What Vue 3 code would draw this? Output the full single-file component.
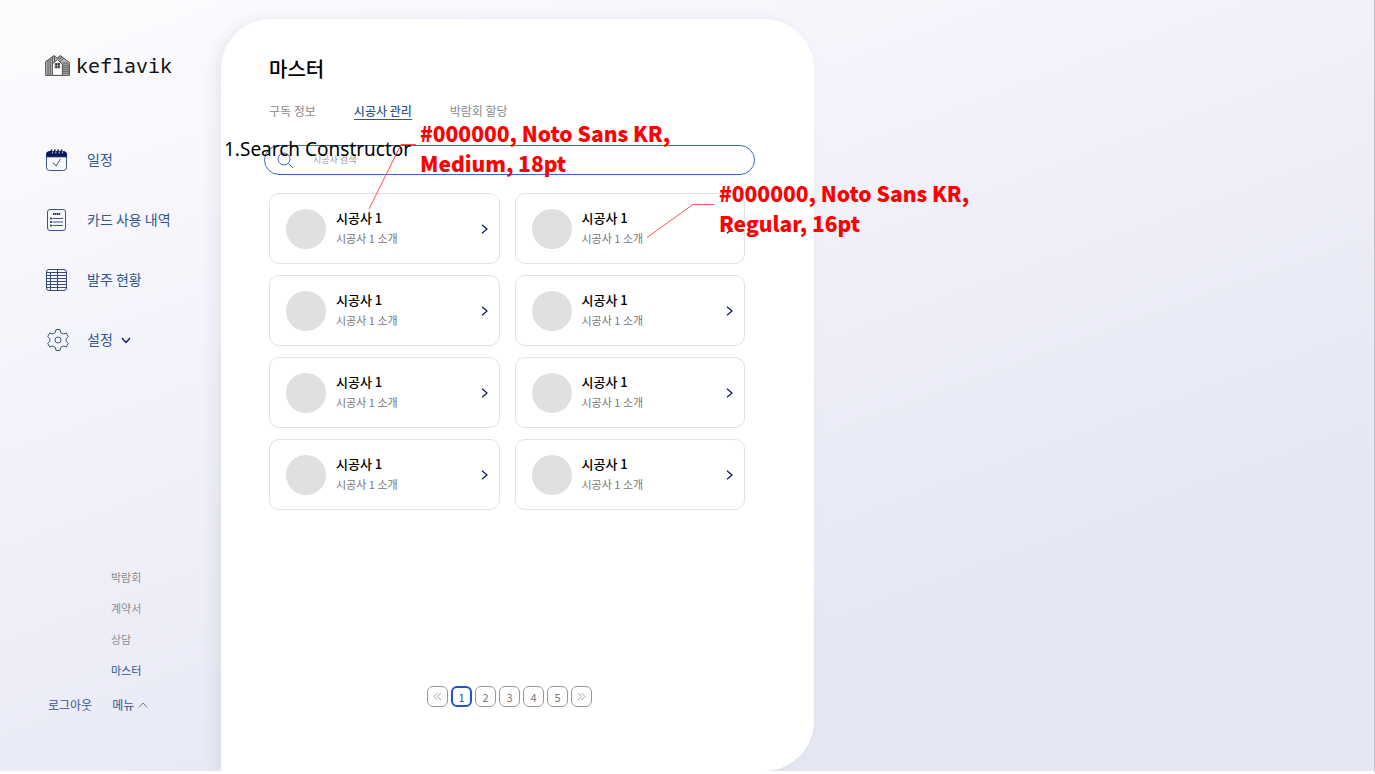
<script setup>
import { ref } from 'vue'

const search = ref('')
const current = ref(1)
const pages = [1, 2, 3, 4, 5]
const tabs = ['구독 정보', '시공사 관리', '박람회 할당']
const submenu = ['박람회', '계약서', '상담', '마스터']
const constructors = Array.from({ length: 8 }, (_, id) => ({
  id,
  name: '시공사 1',
  intro: '시공사 1 소개'
}))
const gridRows = [4, 7, 10, 13, 16, 19]
</script>

<template>
  <div class="shell">
    <aside class="sidebar">
      <a class="logo" href="#">
        <svg width="25" height="22" viewBox="0 0 25 22" fill="none" stroke="#444" stroke-width="0.9">
          <path d="M.6 20.400V6.700L9 .5l3.200 2.600L15.300.5 24.400 7.500v12.900z" fill="#bbb" />
          <path d="M7.400 20.400V9.100l5-4.600 5 4.600v11.300z" fill="#fcfcff" />
          <path d="M3 20V5.200M5.200 20V3.400M7.400 9V1.900M9.500 7V1" />
          <path d="M12.400 3.600l3-2.400M13.800 4.800l3.200-2.600M15.300 6.200l3.300-2.800M17.400 8h5.800M17.400 10.200h7M17.400 12.200h7M17.400 14.200h7M17.400 16.200h7M17.400 18.200h7" />
          <path d="M10.300 8.500h4.300v4.300h-4.300z" fill="#222" />
          <path d="M12.500 8.500v4.500M10 10.700h5" stroke="#ddd" stroke-width="0.6" />
        </svg>
        <span>keflavik</span>
      </a>

      <nav class="nav" aria-label="주 메뉴">
        <a href="#">
          <svg width="24" height="24" viewBox="0 0 24 24" fill="none" stroke="#3c5583">
            <rect x="1.500" y="4" width="20" height="18.500" rx="3" />
            <path d="M1.500 8.800V6.500a3 3 0 0 1 3-3h14a3 3 0 0 1 3 3v2.300z" fill="#06195c" stroke="#06195c" />
            <path d="M6.500 1.500v3.500M9.800 1.500v3.500M13.200 1.500v3.500M16.500 1.500v3.500" stroke="#06195c" stroke-width="1.600" />
            <path d="M7.500 3.500v2M10.800 3.500v2M14.200 3.500v2M17.500 3.500v2" stroke="#eef" stroke-width="0.800" />
            <path d="M8 14.500l3 3.500 4.500-7" />
          </svg>
          <span>일정</span>
        </a>
        <a href="#">
          <svg width="24" height="24" viewBox="0 0 24 24" fill="none" stroke="#3c5583">
            <rect x="2.500" y="1.500" width="18" height="21" rx="2.500" />
            <path d="M8 6h7.500" stroke="#233a70" stroke-width="2.200" stroke-dasharray="1.500 .4" />
            <path d="M7.500 10.500h10.500M7.500 14h10.500M7.500 17.500h10.500" />
            <path d="M5 10.500h2M5 14h2M5 17.500h2" stroke-width="2" />
          </svg>
          <span>카드 사용 내역</span>
        </a>
        <a href="#">
          <svg width="24" height="24" viewBox="0 0 24 24" fill="none" stroke="#33487c">
            <rect x="1.500" y="1.500" width="20" height="21" rx="2.500" />
            <path d="M5.500 4v18.500M12.500 1.500v21" />
            <path v-for="y in gridRows" :key="y" :d="`M1.500 ${y + 0.5}h20`" />
          </svg>
          <span>발주 현황</span>
        </a>
        <a href="#">
          <svg width="24" height="24" viewBox="0 0 24 24" fill="none" stroke="#3c5583" stroke-linejoin="round">
            <path d="M11 1.500h4l.7 3 2.600 1.500 3-.9 2 3.500-2.200 2.100v2.600l2.200 2.100-2 3.500-3-.9-2.600 1.500-.7 3h-4l-.7-3-2.600-1.500-3 .9-2-3.500 2.200-2.100v-2.600L2.700 8.600l2-3.500 3 .9 2.600-1.500z" />
            <circle cx="13" cy="12" r="3" />
          </svg>
          <span>설정</span>
          <svg class="chev" width="10" height="7" viewBox="0 0 10 7" fill="none" stroke="#06195c" stroke-width="1.300"><path d="M1 1l4 4.500L9 1" /></svg>
        </a>
      </nav>

      <div class="lower">
        <nav class="submenu" aria-label="하위 메뉴">
          <a v-for="item in submenu" :key="item" href="#" :class="{ active: item === '마스터' }">{{ item }}</a>
        </nav>
        <div class="account">
          <button type="button">로그아웃</button>
          <button type="button">
            메뉴
            <svg width="10" height="6" viewBox="0 0 10 6" fill="none" stroke="#5d7396" stroke-width="0.900"><path d="M.8 5.500L5 1l4.200 4.500" /></svg>
          </button>
        </div>
      </div>
    </aside>

    <main class="panel">
      <h1>마스터</h1>
      <nav class="tabs" aria-label="마스터 메뉴">
        <a v-for="(tab, i) in tabs" :key="tab" href="#" :class="{ active: i === 1 }">{{ tab }}</a>
      </nav>

      <label class="search">
        <svg width="17" height="17" viewBox="0 0 17 17" fill="none" stroke="#3d66d0"><circle cx="7" cy="7" r="6" /><path d="M11.300 11.300L16 16" /></svg>
        <input v-model="search" type="text" placeholder="시공사 검색" aria-label="시공사 검색" />
      </label>

      <section class="cards">
        <a v-for="c in constructors" :key="c.id" class="card" href="#">
          <span class="avatar"></span>
          <span class="info">
            <strong>{{ c.name }}</strong>
            <span>{{ c.intro }}</span>
          </span>
          <svg width="7" height="10" viewBox="0 0 7 10" fill="none" stroke="#06195c" stroke-width="1.200"><path d="M1 .8L6 5 1 9.200" /></svg>
        </a>
      </section>

      <nav class="pager" aria-label="페이지">
        <button type="button" aria-label="처음">
          <svg width="9" height="9" viewBox="0 0 9 9" fill="none" stroke="#999" stroke-width="0.900"><path d="M4.500 1L1 4.500 4.500 8M8 1L4.500 4.500 8 8" /></svg>
        </button>
        <button v-for="p in pages" :key="p" type="button" :class="{ active: p === current }" @click="current = p">{{ p }}</button>
        <button type="button" aria-label="마지막">
          <svg width="9" height="9" viewBox="0 0 9 9" fill="none" stroke="#999" stroke-width="0.900"><path d="M1 1l3.500 3.500L1 8M4.500 1L8 4.500 4.500 8" /></svg>
        </button>
      </nav>

      <div class="note step">1.Search Constructor</div>
      <svg class="note lead-a" width="50" height="68" viewBox="0 0 50 68" fill="none" stroke="#ff5050"><path d="M1 66L33 1.500h15" /></svg>
      <div class="note spec spec-a">#000000, Noto Sans KR,<br />Medium, 18pt</div>
      <svg class="note lead-b" width="70" height="36" viewBox="0 0 70 36" fill="none" stroke="#ff5050"><path d="M1 34.500L47 1.500h21" /></svg>
      <div class="note spec spec-b">#000000, Noto Sans KR,<br />Regular, 16pt</div>
    </main>
  </div>
</template>

<style>
body {
  margin: 0;
}
</style>

<style scoped>
.shell {
  box-sizing: border-box;
  display: grid;
  grid-template-columns: 221fr 593fr 560fr;
  min-height: 100vh;
  overflow: hidden;
  border-right: 1px solid #c4c4c8;
  border-bottom: 3px solid #fff;
  background: linear-gradient(160deg, #fdfdff 0%, #f3f3fb 32%, #e5e7f3 76%, #e5e7f3 100%);
  font-family: "Noto Sans CJK KR", "Noto Sans", sans-serif;
  color: #000;
}
a {
  color: inherit;
  text-decoration: none;
}
button {
  padding: 0;
  border: 0;
  background: none;
  font: inherit;
  color: inherit;
}
.sidebar {
  display: flex;
  flex-direction: column;
  padding: 54px 0 57px 45px;
}
.logo {
  display: flex;
  align-items: center;
  gap: 6px;
  height: 24px;
  font: 20px/24px "Noto Sans Mono", "DejaVu Sans Mono", monospace;
  color: #111;
}
.nav {
  display: flex;
  flex-direction: column;
  gap: 36px;
  margin-top: 70px;
}
.nav a {
  display: flex;
  align-items: center;
  height: 24px;
  font-size: 14px;
  color: #31568f;
}
.nav span {
  margin: 0 0 2px 18px;
}
.chev {
  margin-left: 8px;
}
.lower {
  margin-top: auto;
}
.submenu {
  display: flex;
  flex-direction: column;
  gap: 15px;
  margin: 0 0 18px 66px;
  font-size: 11px;
  line-height: 16px;
  color: #8c8c8c;
}
.submenu .active {
  color: #31568f;
}
.account {
  display: flex;
  gap: 20px;
  padding-left: 3px;
  font-size: 12px;
  line-height: 18px;
  color: #31568f;
}
.account button {
  display: flex;
  align-items: center;
  gap: 4px;
}
.panel {
  position: relative;
  box-sizing: border-box;
  display: flex;
  flex-direction: column;
  margin-top: 19px;
  padding: 36px 59px 64px 43px;
  border-radius: 50px 50px 50px 0;
  background: #fff;
  box-shadow: -6px 0 14px rgba(40, 50, 90, 0.08);
}
h1 {
  margin: 0 5px;
  font-size: 20px;
  line-height: 28px;
  font-weight: 500;
}
.tabs {
  display: flex;
  gap: 38px;
  margin: 19px 5px 0;
  font-size: 12px;
  line-height: 17px;
  color: #8c8c8c;
}
.tabs .active {
  border-bottom: 1px solid #31568f;
  font-weight: 500;
  color: #31568f;
}
.search {
  box-sizing: border-box;
  display: flex;
  align-items: center;
  gap: 19px;
  height: 30px;
  margin-top: 25px;
  padding: 0 12px;
  border: 1px solid #3d66d0;
  border-radius: 15px;
}
.search input {
  flex: 1;
  padding: 0;
  border: 0;
  outline: 0;
  background: none;
  font: 9px/14px "Noto Sans CJK KR", "Noto Sans", sans-serif;
}
.search input::placeholder {
  color: #9c9c9c;
}
.cards {
  display: grid;
  grid-template-columns: 1fr 1fr;
  gap: 11px 15px;
  margin: 18px 10px 0 5px;
}
.card {
  box-sizing: border-box;
  display: flex;
  align-items: center;
  min-height: 71px;
  padding: 0 11px 0 16px;
  border: 1px solid #e2e2e2;
  border-radius: 10px;
}
.avatar {
  width: 40px;
  height: 40px;
  border-radius: 50%;
  background: #e0e0e0;
}
.info {
  display: flex;
  flex: 1;
  flex-direction: column;
  margin: 0 0 2px 10px;
  font-size: 11px;
  line-height: 20px;
  color: #777;
}
.info strong {
  font-size: 13px;
  font-weight: 500;
  color: #000;
}
.pager {
  display: flex;
  justify-content: center;
  gap: 3px;
  margin-top: auto;
}
.pager button {
  box-sizing: border-box;
  display: grid;
  place-items: center;
  width: 21px;
  height: 21px;
  border: 1px solid #999;
  border-radius: 6px;
  font-size: 11px;
  line-height: 12px;
  color: #777;
}
.pager .active {
  border: 2px solid #2350cc;
  color: #2350cc;
}
.note {
  position: absolute;
  white-space: nowrap;
  pointer-events: none;
}
.step {
  left: 3px;
  top: 116px;
  font: 19px/28px "Noto Sans", sans-serif;
}
.spec {
  font-size: 21px;
  line-height: 30px;
  font-weight: 900;
  color: #f00;
}
.spec-a {
  left: 199px;
  top: 99px;
}
.spec-b {
  left: 498px;
  top: 159px;
}
.lead-a {
  left: 147px;
  top: 124px;
}
.lead-b {
  left: 425px;
  top: 184px;
}
</style>
